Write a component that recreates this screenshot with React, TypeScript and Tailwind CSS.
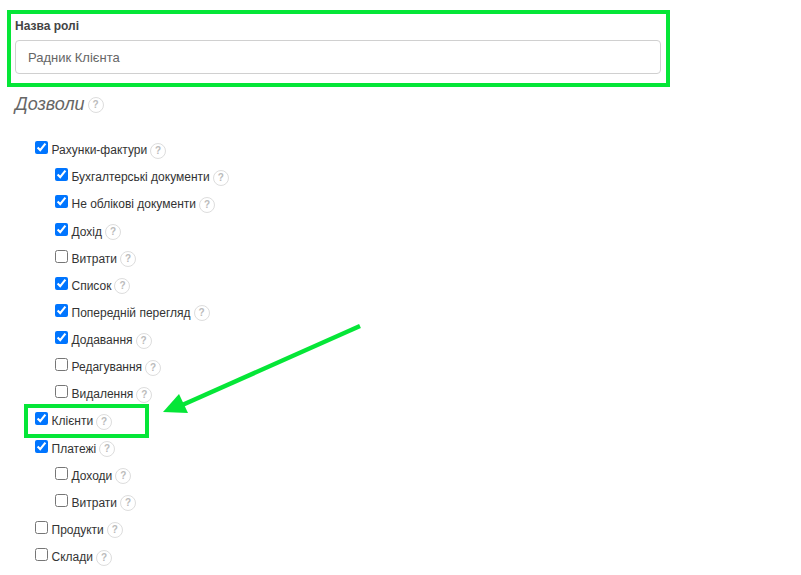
import React from 'react';

interface Perm {
  label: string;
  checked: boolean;
  child?: boolean;
}

const perms: Perm[] = [
  { label: 'Рахунки-фактури', checked: true },
  { label: 'Бухгалтерські документи', checked: true, child: true },
  { label: 'Не облікові документи', checked: true, child: true },
  { label: 'Дохід', checked: true, child: true },
  { label: 'Витрати', checked: false, child: true },
  { label: 'Список', checked: true, child: true },
  { label: 'Попередній перегляд', checked: true, child: true },
  { label: 'Додавання', checked: true, child: true },
  { label: 'Редагування', checked: false, child: true },
  { label: 'Видалення', checked: false, child: true },
  { label: 'Клієнти', checked: true },
  { label: 'Платежі', checked: true },
  { label: 'Доходи', checked: false, child: true },
  { label: 'Витрати', checked: false, child: true },
  { label: 'Продукти', checked: false },
  { label: 'Склади', checked: false },
];

const Help: React.FC<{ className?: string }> = ({ className }) => (
  <span className={`inline-flex h-4 w-4 shrink-0 items-center justify-center rounded-full border border-[#dddddd] text-[10px] font-bold leading-none text-[#bbbbbb] ${className ?? ''}`}>
    ?
  </span>
);

const PermRow: React.FC<{ perm: Perm }> = ({ perm }) => (
  <div className={`flex h-[27.13px] items-center ${perm.child ? 'pl-[40px]' : 'pl-[20px]'}`}>
    <input type="checkbox" checked={perm.checked} readOnly className="m-0 mb-[5px] mr-[3.5px] h-[13px] w-[13px] shrink-0" />
    <span className="text-[12px] text-[#333333]">{perm.label}</span>
    <Help className="ml-[3px] mt-[1px]" />
  </div>
);

export default function App() {
  return (
    <div className="relative h-[575px] w-[801px] overflow-hidden bg-white px-[15px] pt-[19px] font-['Liberation_Sans',Arial,sans-serif]">
      <label className="block text-[12px] font-bold leading-[14px] text-[#444444]">Назва ролі</label>
      <input
        readOnly
        value="Радник Клієнта"
        className="mt-[7px] block h-[34px] w-[646px] rounded-[4px] border border-[#d0d0d0] bg-white px-[12px] text-[13px] text-[#666666] outline-none"
      />
      <div className="mt-[18px] flex h-[24px] items-center">
        <h2 className="text-[18px] font-normal italic text-[#666666]">Дозволи</h2>
        <Help className="ml-[3px] mt-[2px]" />
      </div>
      <div className="mt-[20.6px]">
        {perms.map((perm, i) => (
          <PermRow key={i} perm={perm} />
        ))}
      </div>

      {/* annotations drawn over the screenshot */}
      <div className="absolute left-[7px] top-[10px] h-[77px] w-[663px] border-4 border-[#05e637]" />
      <div className="absolute left-[24px] top-[404px] h-[34px] w-[125px] border-4 border-[#05e637]" />
      <svg className="absolute left-[160px] top-[320px]" width="205" height="100" viewBox="0 0 205 100">
        <line x1="200" y1="6" x2="20" y2="86" stroke="#05e637" strokeWidth="4.5" />
        <polygon points="3,92 19,74 28,93" fill="#05e637" />
      </svg>
    </div>
  );
}
